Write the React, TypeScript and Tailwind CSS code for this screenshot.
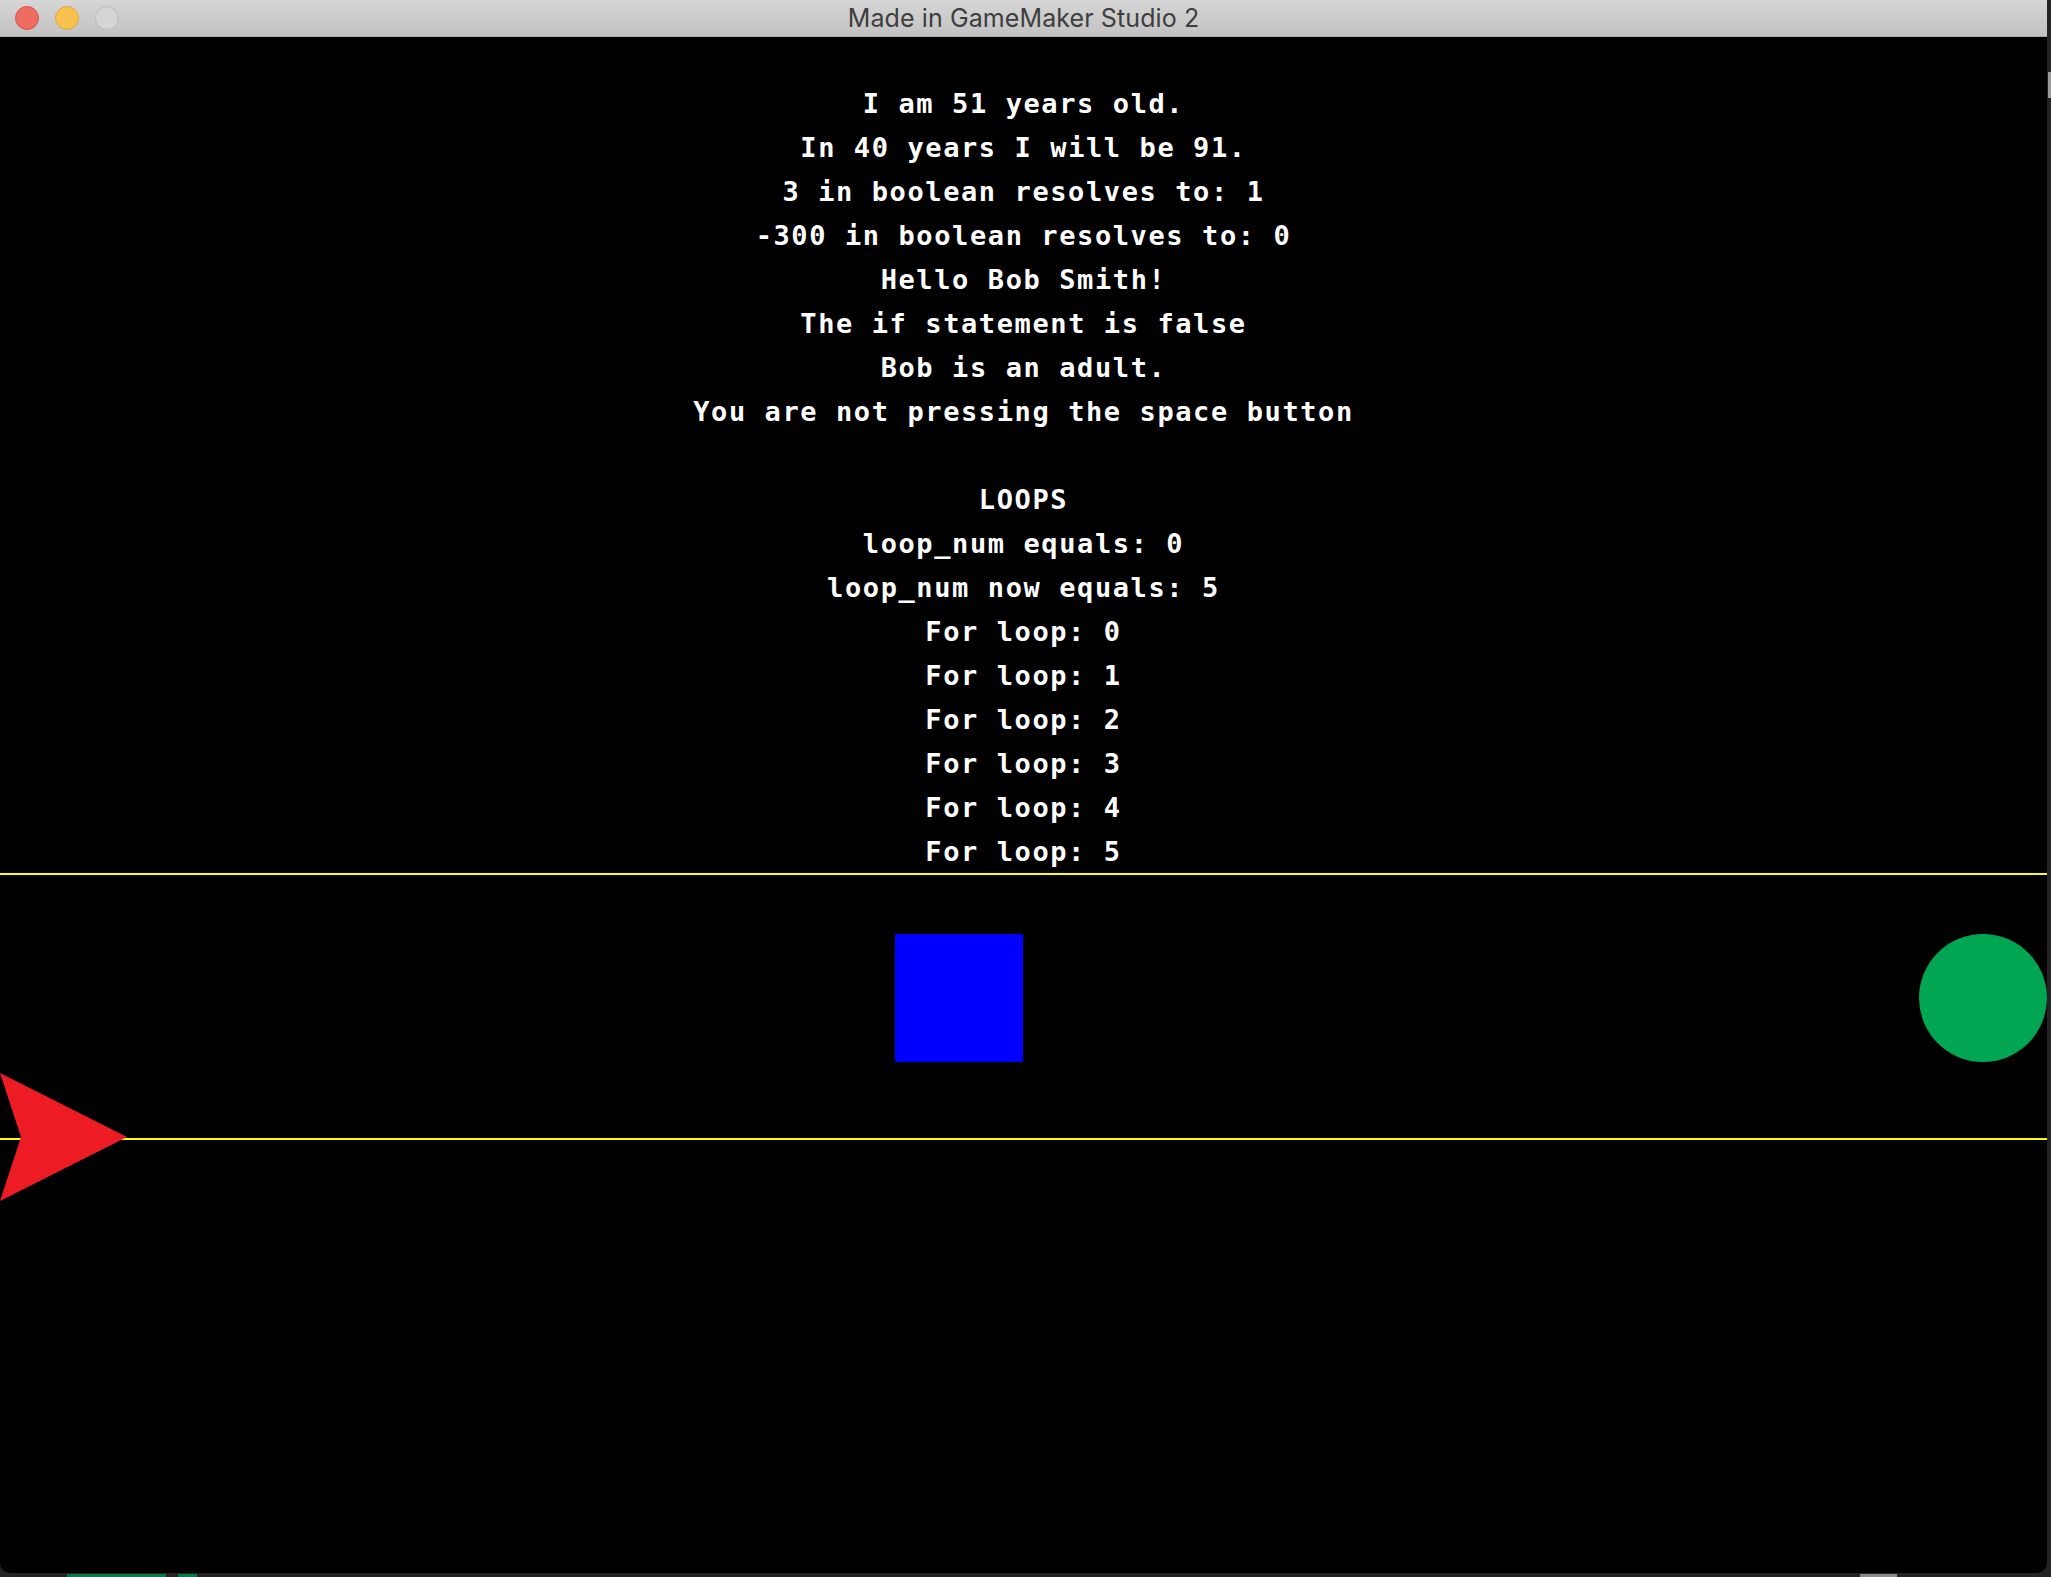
import React from 'react';

const lines = [
  'I am 51 years old.',
  'In 40 years I will be 91.',
  '3 in boolean resolves to: 1',
  '-300 in boolean resolves to: 0',
  'Hello Bob Smith!',
  'The if statement is false',
  'Bob is an adult.',
  'You are not pressing the space button',
  '',
  'LOOPS',
  'loop_num equals: 0',
  'loop_num now equals: 5',
  'For loop: 0',
  'For loop: 1',
  'For loop: 2',
  'For loop: 3',
  'For loop: 4',
  'For loop: 5',
];

const App = () => {
  return (
    <div className="relative w-[2051px] h-[1577px] bg-[#242424] overflow-hidden">
      {/* desktop bits peeking out behind the window */}
      <div className="absolute right-0 top-[72px] w-[3px] h-[26px] bg-[#9a9a9a]" />
      <div className="absolute left-[67px] bottom-0 w-[99px] h-[3px] bg-[#0a7a4a]" />
      <div className="absolute left-[178px] bottom-0 w-[19px] h-[3px] bg-[#0a7a4a]" />
      <div className="absolute left-[1860px] bottom-0 w-[37px] h-[3px] bg-[#8a8a8a]" />

      <div className="relative flex flex-col w-[2047px] h-[1573px] rounded-b-[10px] overflow-hidden">
        {/* title bar */}
        <div className="grid grid-cols-[1fr_auto_1fr] items-center h-[37px] shrink-0 bg-gradient-to-b from-[#d6d6d6] to-[#c2c2c2] border-b border-[#a9a9a9]">
          <div className="flex items-center gap-[16px] pl-[15px]">
            <span className="w-[24px] h-[24px] rounded-full bg-[#ef6c63] border border-[#d3564e]" />
            <span className="w-[24px] h-[24px] rounded-full bg-[#f8c24f] border border-[#dea53b]" />
            <span className="w-[24px] h-[24px] rounded-full bg-[#d5d5d5] border border-[#bcbcbc]" />
          </div>
          <p className="text-[25px] leading-none text-[#3e3e3e] font-['Inter',sans-serif] tracking-[0.1px]">
            Made in GameMaker Studio 2
          </p>
          <div />
        </div>

        {/* game canvas */}
        <div className="relative flex-1 bg-black">
          <div className="flex flex-col items-center pt-[45px] font-['DejaVu_Sans_Mono',monospace] font-bold text-white text-[27px] leading-[44px] tracking-[1.6px]">
            {lines.map((line, i) => (
              <p key={i} className="h-[44px] whitespace-pre">
                {line}
              </p>
            ))}
          </div>

          {/* room objects */}
          <div className="absolute left-0 right-0 top-[836px] h-[2px] bg-[#ffff00]" />
          <div className="absolute left-0 right-0 top-[1101px] h-[2px] bg-[#ffff00]" />
          <div className="absolute left-[895px] top-[897px] w-[128px] h-[128px] bg-[#0000ff]" />
          <div className="absolute left-[1919px] top-[897px] w-[128px] h-[128px] rounded-full bg-[#00a651]" />
          <svg className="absolute left-0 top-[1036px]" width="128" height="129" viewBox="0 0 128 129">
            <polygon points="0,0 127,64 0,128 21,64" fill="#ed1c24" />
          </svg>
        </div>
      </div>
    </div>
  );
};

export default App;
